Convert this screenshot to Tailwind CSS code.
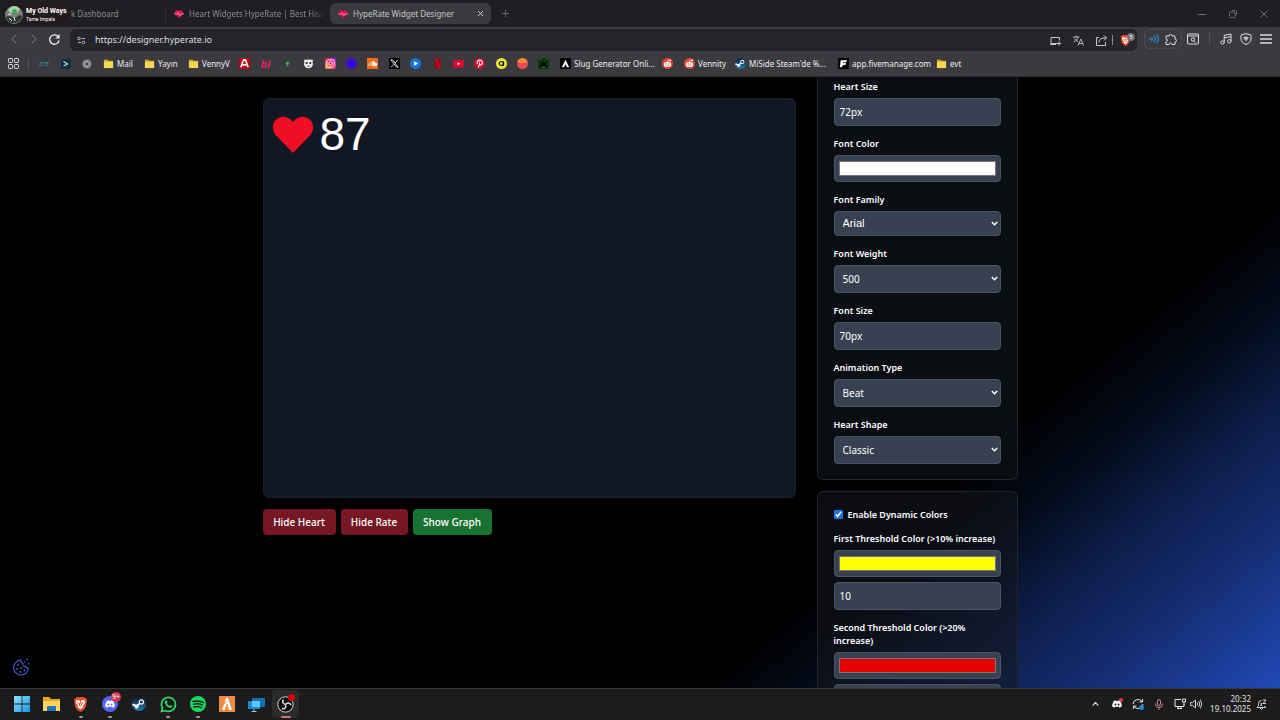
<!DOCTYPE html>
<html lang="en">
<head>
    <meta charset="UTF-8">
    <meta name="viewport" content="width=device-width, initial-scale=1.0">
    <title>HypeRate Widget Designer</title>
    <script src="https://cdn.jsdelivr.net/npm/@tailwindcss/browser@4"></script>
</head>

<body class="h-screen flex flex-col overflow-hidden bg-black text-white font-['Noto_Sans','Open_Sans',sans-serif]">
    <!-- Shared icons -->
    <svg class="absolute size-0">
        <symbol id="folder" viewBox="0 0 12 12"><path d="M1 2h4l1 1h5v8H1z" fill="#d9a928"/><path d="M1 4h10v7H1z" fill="#f6d556"/></symbol>
        <symbol id="pulse" viewBox="0 0 12 12"><path d="M6 11 1.5 6.5a3 3 0 0 1 4.5-4 3 3 0 0 1 4.5 4z" fill="#d5124e"/><path d="M0 6h4l1-2 2 4 1-2h4" fill="none" stroke="#ff9fb8" stroke-width=".9"/></symbol>
        <symbol id="reddit" viewBox="0 0 12 12"><circle cx="6" cy="6" r="6" fill="#e8432a"/><circle cx="9" cy="2.5" r="1" fill="#fff"/><path d="M6 4.5 6.6 2.300 9 2.500" fill="none" stroke="#fff" stroke-width=".6"/><ellipse cx="6" cy="7" rx="4" ry="2.800" fill="#fff"/><circle cx="4.400" cy="6.500" r=".8" fill="#e8432a"/><circle cx="7.600" cy="6.500" r=".8" fill="#e8432a"/><path d="M4.500 8.200q1.500 1 3 0" fill="none" stroke="#333" stroke-width=".5"/></symbol>
        <linearGradient id="sg" x1="0" y1="0" x2="0" y2="1"><stop offset="0" stop-color="#101b36"/><stop offset="1" stop-color="#1982b8"/></linearGradient>
        <symbol id="steam" viewBox="0 0 16 16"><circle cx="8" cy="8" r="8" fill="url(#sg)"/><path d="m.5 8.500 5 2L9 7" fill="none" stroke="#fff" stroke-width="2.200"/><circle cx="5.300" cy="10.800" r="2.200" fill="#fff"/><circle cx="10.700" cy="5.700" r="3" fill="#fff"/><circle cx="10.700" cy="5.700" r="1.700" fill="#1b3555"/></symbol>
        <symbol id="lion" viewBox="0 0 16 18"><path d="M4 1h8l1.500 1.500L15 3l-1 7c-.5 3-3 5-6 7-3-2-5.500-4-6-7L1 3l1.500-.5z" fill="#f04a23"/><path d="m4 4 4 1 4-1 1 3-2.500 3.500.5 1.500-3 2-3-2 .5-1.500L3 7z" fill="#fff"/><path d="M4.500 7 7 8v2l1 1 1-1V8l2.500-1M8 5v3" fill="none" stroke="#f04a23" stroke-width="1"/></symbol>
        <symbol id="discord" viewBox="0 0 16 12"><path d="M3 1 6 0l.6 1h2.800L10 0l3 1c2 3 3 6 2.600 9L12 12l-1-1.700H5L4 12 .4 10C0 7 1 4 3 1zm2.500 4a1.500 1.600 0 1 0 0 3.200 1.500 1.600 0 0 0 0-3.200zm5 0a1.500 1.600 0 1 0 0 3.200 1.500 1.600 0 0 0 0-3.200z" fill="#fff" fill-rule="evenodd"/></symbol>
        <symbol id="chevron" viewBox="0 0 7 5"><path d="m.8 1 2.700 2.700L6.200 1" fill="none" stroke="#fff" stroke-width="1.500"/></symbol>
    </svg>

    <!-- Tab strip -->
    <header class="shrink-0 h-[27px] bg-[#1f1e23] flex items-center text-[8px] leading-3">
        <div class="relative w-[165px] h-full">
            <button class="w-full h-full text-left pl-[71px] text-[#8b8b90] whitespace-nowrap">k Dashboard</button>
            <!-- Now playing overlay -->
            <div class="absolute left-1 top-1 flex items-center gap-[2px] text-white bg-[#241a1e] h-5">
                <svg class="size-5" viewBox="0 0 20 20"><circle cx="10" cy="11" r="9" fill="#7a7f7b"/><path d="M4 6c3-5 9-5 12-1l-3 4-4-2-2 3z" fill="#a9d3a2"/><path d="m8 6 4-1 1 3-3 2z" fill="#2fa84b"/><path d="M2 13c4-3 7 2 9 1s4-4 7-2c0 4-4 7-8 7s-7-2-8-6z" fill="#303632"/><path d="m5 14 3 3m2-4 1 4M4 10l3 1" stroke="#e5e5e5"/></svg>
                <div class="whitespace-nowrap font-[Roboto,sans-serif]">
                    <p class="text-[7px] leading-[9px] font-bold">My Old Ways</p>
                    <p class="text-[5px] leading-[6px]">Tame Impala</p>
                </div>
            </div>
        </div>
        <button class="w-[165px] h-4 border-l border-[#333338] flex items-center gap-[5px] pl-2 text-[#8b8b90]">
            <svg class="size-[10px] shrink-0"><use href="#pulse"/></svg>
            <span class="whitespace-nowrap [mask-image:linear-gradient(to_right,black_88%,transparent)]">Heart Widgets HypeRate | Best Hear</span>
        </button>
        <div class="w-[161px] h-[21px] rounded-md bg-[#3a3a3f] flex items-center gap-[5px] px-2 text-[#c4c4c8]">
            <svg class="size-[10px] shrink-0"><use href="#pulse"/></svg>
            <button class="flex-1 text-left">HypeRate Widget Designer</button>
            <button aria-label="Close tab"><svg class="size-[5px]" viewBox="0 0 6 6" stroke="#e4e4e7"><path d="m0 0 6 6M6 0 0 6"/></svg></button>
        </div>
        <button class="ml-[11px]" aria-label="New tab"><svg class="size-[7px]" viewBox="0 0 7 7" stroke="#66666b"><path d="M3.500 0v7M0 3.500h7"/></svg></button>
        <div class="ml-auto mr-3 flex items-center gap-[23px] text-[#707075]">
            <button aria-label="Minimize"><svg class="size-2" viewBox="0 0 8 8" stroke="currentColor"><path d="M0 4.500h8"/></svg></button>
            <button aria-label="Restore"><svg class="size-2" viewBox="0 0 8 8" stroke="currentColor" fill="none" stroke-width=".9"><rect x=".5" y="2" width="5.500" height="5.500" rx="1"/><path d="M2.500 1.500 3.300.5H6.500a1 1 0 0 1 1 1v3l-1 1"/></svg></button>
            <button aria-label="Close"><svg class="size-2" viewBox="0 0 8 8" stroke="currentColor"><path d="m.5.5 7 7m0-7-7 7"/></svg></button>
        </div>
    </header>

    <!-- Address bar -->
    <div class="shrink-0 h-6 bg-[#3a3a3f] flex items-center pl-[11px] pr-2 text-[#c8c8cc]">
        <button class="mr-[14px]" aria-label="Back"><svg class="w-[6px] h-[10px]" viewBox="0 0 6 10" fill="none" stroke="#7c7c81"><path d="M5.500.500 1 5l4.500 4.500"/></svg></button>
        <button class="mr-3" aria-label="Forward"><svg class="w-[6px] h-[10px]" viewBox="0 0 6 10" fill="none" stroke="#7c7c81"><path d="M.5.500 5 5 .5 9.500"/></svg></button>
        <button class="mr-[10px]" aria-label="Reload"><svg class="size-[11px]" viewBox="0 0 11 11" fill="none" stroke="#ececef" stroke-width="1.300"><path d="M9.500 3.200A4.700 4.700 0 1 0 10 6.500M10 .5v3.300H6.700"/></svg></button>
        <form class="flex-1 h-[22px] mt-[2px] rounded-md bg-[#242429] flex items-center pl-[7px] pr-[2px]">
            <svg class="size-[9px]" viewBox="0 0 9 9" fill="none" stroke="#b5b5ba"><circle cx="2" cy="2.500" r="1.300"/><path d="M4.500 2.500H8M1 6.500h3"/><circle cx="6.500" cy="6.500" r="1.300"/></svg>
            <input type="text" aria-label="Address" value="https://designer.hyperate.io" class="flex-1 ml-[9px] text-[9px] leading-4 text-[#dedee2] bg-transparent outline-none">
            <div class="flex items-center gap-3">
                <button type="button" aria-label="Cast"><svg class="size-[11px]" viewBox="0 0 11 11" fill="none" stroke="currentColor"><path d="M7 8.500H1v-6h8.500v3M0 9.500h6M7 8.500h4M9 6.500v4"/></svg></button>
                <button type="button" aria-label="Translate"><svg class="size-[11px]" viewBox="0 0 11 11" fill="none" stroke="currentColor" stroke-width=".9"><path d="M0 2h6.500M3.200.5V2M5.200 2C4.500 4.500 2.500 6 .5 7M1.500 3.500C2.500 5 3.500 6 5 6.500M5 10.500 7.800 4l2.700 6.500M6 8.500h3.500"/></svg></button>
                <button type="button" aria-label="Share"><svg class="size-[11px]" viewBox="0 0 11 11" fill="none" stroke="currentColor"><path d="M3 2.500H.5v8h9V7M3 7.500c0-3 2-4.500 5-4.500h2.500M8 .5 10.500 3 8 5.500"/></svg></button>
            </div>
            <span class="w-px h-[10px] bg-[#8b8b90] ml-[5px] mr-[7px]"></span>
            <button type="button" class="relative pr-1" aria-label="Brave Shields">
                <svg class="w-[11px] h-[13px]"><use href="#lion"/></svg>
                <span class="absolute left-[7px] -top-px size-2 rounded-full bg-[#6e6e78] text-[6px] leading-2 text-white">5</span>
            </button>
        </form>
        <div class="ml-[7px] w-[38px] h-5 rounded-md border border-[#4a4a50] flex items-center justify-between px-1">
            <button aria-label="Volume extension"><svg class="size-[10px]" viewBox="0 0 10 10" fill="none" stroke="#2593df" stroke-width="1.200"><circle cx="1" cy="5" r=".4"/><path d="M2.500 3q1.500 2 0 4M5 1.700q2.500 3.300 0 6.600M7.500.5q3.500 4.500 0 9"/></svg></button>
            <button aria-label="Extensions"><svg class="size-3" viewBox="0 0 12 12" fill="none" stroke="#dcdce0"><path d="M1 3h3a1.500 1.500 0 1 1 3 0h3v3a1.500 1.500 0 1 1 0 3v2.500H7a1.500 1.500 0 0 0-3 0H1V8.500a1.400 1.400 0 0 0 0-2.800z"/></svg></button>
        </div>
        <button class="ml-[5px]" aria-label="Search tabs"><svg class="size-3" viewBox="0 0 12 12" fill="none" stroke="#dcdce0"><rect x=".5" y="1" width="11" height="10" rx="1"/><path d="M1 3h10M7.500 8l1.500 1.500"/><circle cx="6" cy="6.500" r="1.700"/></svg></button>
        <span class="w-px h-3 bg-[#56565b] mx-[10px]"></span>
        <div class="flex items-center gap-2">
            <button aria-label="Media"><svg class="size-3" viewBox="0 0 12 12" fill="none" stroke="#dcdce0"><circle cx="2.500" cy="9.500" r="1.700"/><circle cx="9.300" cy="8.300" r="1.700"/><path d="M4.200 9.500V2.300L11 1v7.300M4.200 4.800 11 3.500"/></svg></button>
            <button aria-label="VPN"><svg class="size-3" viewBox="0 0 12 12" fill="none" stroke="#dcdce0"><path d="M6 .7 11 2v4c0 2.500-2 4.300-5 5.500C3 10.300 1 8.500 1 6V2z"/><path d="M3 4.500q3-2 6 0L6 8.500z" fill="#bcbcc0" stroke="none"/></svg></button>
            <button aria-label="Menu"><svg class="size-3" viewBox="0 0 12 12" stroke="#dcdce0" stroke-width="1.300"><path d="M0 2h12M0 6h12M0 10h12"/></svg></button>
        </div>
    </div>

    <!-- Bookmarks -->
    <nav class="shrink-0 h-[26px] bg-[#3a3a3f] border-b border-[#2a2a2e] flex items-center pl-2 text-[8px] leading-3 text-[#ededf0] whitespace-nowrap">
        <a href="#" aria-label="Apps"><svg class="size-[11px]" viewBox="0 0 11 11" fill="none" stroke="#dcdce0"><rect x=".5" y=".5" width="4" height="4" rx=".7"/><rect x="6.500" y=".5" width="4" height="4" rx=".7"/><rect x=".5" y="6.500" width="4" height="4" rx=".7"/><rect x="6.500" y="6.500" width="4" height="4" rx=".7"/></svg></a>
        <span class="w-px h-[10px] bg-[#56565b] ml-[9px] mr-[10px]"></span>
        <a href="#" class="w-[22px] text-[6px] text-[#2b9fb4]">ZTE</a>
        <a href="#" class="w-[21px]" aria-label="Console"><svg class="size-[10px]" viewBox="0 0 10 10"><rect width="10" height="10" rx="2" fill="#122c3e"/><path d="m2.500 2.500 4 2.500-4 2" fill="none" stroke="#bfe3f3" stroke-width="1.100"/></svg></a>
        <a href="#" class="w-[21px]" aria-label="ChatGPT"><svg class="size-[10px]" viewBox="0 0 10 10" fill="none" stroke="#c9c9cc" stroke-width=".7"><ellipse cx="5" cy="5" rx="4.600" ry="2"/><ellipse cx="5" cy="5" rx="4.600" ry="2" transform="rotate(60 5 5)"/><ellipse cx="5" cy="5" rx="4.600" ry="2" transform="rotate(120 5 5)"/></svg></a>
        <a href="#" class="w-[41px] flex items-center gap-[3px]"><svg class="size-[11px]"><use href="#folder"/></svg>Mail</a>
        <a href="#" class="w-11 flex items-center gap-[3px]"><svg class="size-[11px]"><use href="#folder"/></svg>Yayın</a>
        <a href="#" class="w-[51px] flex items-center gap-[3px]"><svg class="size-[11px]"><use href="#folder"/></svg>VennyV</a>
        <div class="w-[332px] flex items-center justify-between">
            <a href="#" aria-label="A"><svg class="size-[11px]" viewBox="0 0 12 12"><path fill="#c3000f" d="M0 0h12v12H0z"/><path d="M2 10 5 2h2l3 8M4 7.500h4" fill="none" stroke="#fff" stroke-width="1.800"/></svg></a>
            <a href="#" class="w-[11px] text-[11px] leading-[11px] font-bold italic text-[#e0245e]">bi</a>
            <a href="#" aria-label="Bolt"><svg class="size-[11px]" viewBox="0 0 12 12"><path d="M7.500 2.500 3.500 6.500h2l-1 3.500 4-4.500h-2z" fill="#35c46b"/></svg></a>
            <a href="#" aria-label="Panda"><svg class="size-[11px]" viewBox="0 0 12 12"><circle cx="2.500" cy="3" r="1.500" fill="#ddd"/><circle cx="9.500" cy="3" r="1.500" fill="#ddd"/><circle cx="6" cy="6.500" r="4.800" fill="#f3f3f3"/><circle cx="4" cy="5.500" r="1.200" fill="#222"/><circle cx="8" cy="5.500" r="1.200" fill="#222"/><path d="M4 8.500q2 2 4 0z" fill="#222"/></svg></a>
            <a href="#" aria-label="Instagram"><svg class="size-[11px]" viewBox="0 0 12 12"><defs><linearGradient id="ig" x1="0" y1="1" x2="1" y2="0"><stop stop-color="#ffb52e"/><stop offset=".5" stop-color="#e8235a"/><stop offset="1" stop-color="#9b2bf0"/></linearGradient></defs><rect width="12" height="12" rx="2" fill="url(#ig)"/><rect x="2" y="2" width="8" height="8" rx="2" fill="none" stroke="#fff"/><circle cx="6" cy="6" r="1.900" fill="none" stroke="#fff"/></svg></a>
            <a href="#" aria-label="Music"><svg class="size-[11px]" viewBox="0 0 12 12"><circle cx="6" cy="6" r="6" fill="#3a0ce0"/><path d="M2.500 4.500q3.500-1.500 7 .5M3 6.500q3-1 6 .5M3.500 8.500q2.500-.7 4.500.3" stroke="#2207a0" fill="none"/></svg></a>
            <a href="#" aria-label="SoundCloud"><svg class="size-[11px]" viewBox="0 0 12 12"><path fill="#f26a1b" d="M0 0h12v12H0z"/><path d="M6 8.500V4q2.500-1 3 1.500 2 0 2 1.500T9.500 8.500zM2 6v2.500M3.300 5v3.500M4.600 4.500v4" fill="#fff" stroke="#fff" stroke-width=".6"/></svg></a>
            <a href="#" aria-label="X"><svg class="size-[11px]" viewBox="0 0 12 12"><path d="M0 0h12v12H0z"/><path d="M2 2h1.800L10 10H8.200zM9.700 2 6.800 5.300M5.200 6.900 2.300 10" fill="none" stroke="#fff" stroke-width=".9"/></svg></a>
            <a href="#" aria-label="Play"><svg class="size-[11px]" viewBox="0 0 12 12"><circle cx="6" cy="6" r="6" fill="#1275d8"/><path d="m4.500 3.500 4.500 2.500-4.500 2.500z" fill="#fff"/></svg></a>
            <a href="#" aria-label="Netflix"><svg class="size-[11px]" viewBox="0 0 12 12"><path d="M3 0h2.500v12H3zM7 0h2.500v12H7z" fill="#9c0610"/><path d="M3 0h2.500l4 12H7z" fill="#c90b17"/></svg></a>
            <a href="#" aria-label="YouTube"><svg class="size-[11px]" viewBox="0 0 12 12"><rect y="2" width="12" height="8.500" rx="2" fill="#e0052f"/><path d="m5 4.500 3 1.700L5 8z" fill="#fff"/></svg></a>
            <a href="#" aria-label="Pinterest"><svg class="size-[11px]" viewBox="0 0 12 12"><circle cx="6" cy="6" r="6" fill="#d40b2b"/><path d="M3.700 6.500C2.500 3 5 2.300 6.300 2.300c4 0 3.200 5.200.7 5.200-.8 0-1.300-.6-1.300-.6M6.300 4.300 4.800 10.500" fill="none" stroke="#fff" stroke-width="1.200"/></svg></a>
            <a href="#" aria-label="Eksi"><svg class="size-[11px]" viewBox="0 0 12 12"><circle cx="6" cy="6" r="6" fill="#e9ea2c"/><circle cx="5.800" cy="6" r="2.200" fill="none" stroke="#111" stroke-width="1.300"/><path d="M8.300 3.500v5" stroke="#111" stroke-width="1.200"/></svg></a>
            <a href="#" aria-label="Sunset"><svg class="size-[11px]" viewBox="0 0 12 12"><circle cx="6" cy="6" r="6" fill="#ee4e48"/><path d="M.5 4A6 6 0 0 1 11.500 4L6 6z" fill="#f78b36"/><path d="M.5 7.500q5-3 11 0" fill="none" stroke="#d9536a"/></svg></a>
            <a href="#" aria-label="Alien"><svg class="size-[11px]" viewBox="0 0 12 12"><path fill="#073c0c" d="M0 0h12v12H0z"/><path d="M2 10V8l2-1-2-3 3 1 1-2 1 2 3-1-2 3 2 1v2l-3-1H5z"/><path d="M1 1h2M9 1h2M4.500 10h3" stroke="#169a28"/></svg></a>
            <a href="#" aria-label="Slug Generator"><svg class="size-[11px]" viewBox="0 0 12 12"><path fill="#050505" d="M0 0h12v12H0z"/><path d="M2 10 6 2l4 8H7.500L6 6.500 4.500 10z" fill="#fff"/></svg></a>
        </div>
        <a href="#" class="w-[91px] pl-[3px]">Slug Generator Onli...</a>
        <a href="#" class="w-[22px]" aria-label="Reddit"><svg class="size-[11px]"><use href="#reddit"/></svg></a>
        <a href="#" class="w-[51px] flex items-center gap-[3px]"><svg class="size-[11px]"><use href="#reddit"/></svg>Vennity</a>
        <a href="#" class="w-[103px] flex items-center gap-[3px]"><svg class="size-[11px]"><use href="#steam"/></svg>MiSide Steam'de %...</a>
        <a href="#" class="w-[98px] flex items-center gap-[3px]"><svg class="size-[11px] shrink-0" viewBox="0 0 12 12"><path fill="#050505" d="M0 0h12v12H0z"/><path d="M3 2.500h7L9 4.500H5.500v1H9l-1 2H5.500L4 10H2z" fill="#fff"/></svg>app.fivemanage.com</a>
        <a href="#" class="flex items-center gap-[3px]"><svg class="size-[11px]"><use href="#folder"/></svg>evt</a>
    </nav>

    <!-- Widget designer -->
    <main class="relative flex-1 min-h-0 overflow-hidden bg-[linear-gradient(140deg,#000_71%,#030b1a_77%,#0d1f4e_84%,#142c70_90%,#2149b5_100%)]">
        <div class="mx-auto max-w-[755px] grid grid-cols-[1fr_201px] gap-[21px] items-start">
            <section class="pt-[21px]">
                <div class="h-[400px] rounded-md border border-[#172131] bg-[#111723] p-2 flex items-start gap-[6px]">
                    <svg class="w-[42px] h-[54px]" viewBox="0 0 42 54"><path d="M21 46 4.500 29C-1 23 0 15 5.500 11.500 11 8 17.500 10 21 15c3.500-5 10-7 15.500-3.500C42 15 43 23 37.500 29z" fill="#ee0f25"/></svg>
                    <span class="text-[46px] leading-[54px] font-['Liberation_Sans',Arial,sans-serif]">87</span>
                </div>
                <div class="mt-[11px] flex gap-[5px] text-[10px] leading-[15px] font-medium">
                    <button class="w-[73px] h-[26px] rounded bg-[#751824] whitespace-nowrap">Hide Heart</button>
                    <button class="w-[67px] h-[26px] rounded bg-[#751824] whitespace-nowrap">Hide Rate</button>
                    <button class="w-[79px] h-[26px] rounded bg-[#187333] whitespace-nowrap">Show Graph</button>
                </div>
            </section>

            <aside class="flex flex-col gap-[11px] text-[9px] leading-[13px] font-semibold">
                <div class="flex flex-col gap-[11px] px-4 pt-[3px] pb-[15px] rounded-b-md border border-t-0 border-[#22262b] bg-[#0a0d12]">
                    <div class="flex flex-col gap-[5px]">
                        <label for="heartSize">Heart Size</label>
                        <input id="heartSize" type="text" value="72px" class="w-full h-7 px-[5px] rounded border border-[#4b5563] bg-[#374151] text-[10px] font-normal">
                    </div>
                    <div class="flex flex-col gap-[5px]">
                        <label for="fontColor">Font Color</label>
                        <input id="fontColor" type="color" value="#ffffff" class="block w-full h-[27px] px-1 py-[5px] rounded border border-[#4b5563] bg-[#374151] [&::-webkit-color-swatch-wrapper]:p-0">
                    </div>
                    <div class="flex flex-col gap-[5px]">
                        <label for="fontFamily">Font Family</label>
                        <div class="relative">
                            <select id="fontFamily" class="block appearance-none w-full h-[25px] px-2 rounded border border-[#4b5563] bg-[#374151] text-[11px] font-normal font-['Liberation_Sans',Arial,sans-serif]"><option>Arial</option></select>
                            <svg class="absolute right-[3px] top-[10px] w-[7px] h-[5px] pointer-events-none"><use href="#chevron"/></svg>
                        </div>
                    </div>
                    <div class="flex flex-col gap-[5px]">
                        <label for="fontWeight">Font Weight</label>
                        <div class="relative">
                            <select id="fontWeight" class="block appearance-none w-full h-7 px-2 rounded border border-[#4b5563] bg-[#374151] text-[10px] font-normal"><option>500</option></select>
                            <svg class="absolute right-[3px] top-[11px] w-[7px] h-[5px] pointer-events-none"><use href="#chevron"/></svg>
                        </div>
                    </div>
                    <div class="flex flex-col gap-[5px]">
                        <label for="fontSize">Font Size</label>
                        <input id="fontSize" type="text" value="70px" class="w-full h-7 px-[5px] rounded border border-[#4b5563] bg-[#374151] text-[10px] font-normal">
                    </div>
                    <div class="flex flex-col gap-[5px]">
                        <label for="animationType">Animation Type</label>
                        <div class="relative">
                            <select id="animationType" class="block appearance-none w-full h-7 px-2 rounded border border-[#4b5563] bg-[#374151] text-[10px] font-normal"><option>Beat</option></select>
                            <svg class="absolute right-[3px] top-[11px] w-[7px] h-[5px] pointer-events-none"><use href="#chevron"/></svg>
                        </div>
                    </div>
                    <div class="flex flex-col gap-[5px]">
                        <label for="heartShape">Heart Shape</label>
                        <div class="relative">
                            <select id="heartShape" class="block appearance-none w-full h-7 px-2 rounded border border-[#4b5563] bg-[#374151] text-[10px] font-normal"><option>Classic</option></select>
                            <svg class="absolute right-[3px] top-[11px] w-[7px] h-[5px] pointer-events-none"><use href="#chevron"/></svg>
                        </div>
                    </div>
                </div>

                <div class="flex flex-col gap-[11px] p-4 rounded-md border border-[#22262b] bg-[linear-gradient(140deg,#0b0d12_35%,#142142)]">
                    <label class="flex items-center gap-[5px]">
                        <input type="checkbox" checked class="size-[9px] accent-[#1a73e8]">
                        Enable Dynamic Colors
                    </label>
                    <div class="flex flex-col gap-[5px]">
                        <label for="firstColor">First Threshold Color (&gt;10% increase)</label>
                        <input id="firstColor" type="color" value="#ffff00" class="block w-full h-[27px] px-1 py-[5px] rounded border border-[#4b5563] bg-[#374151] [&::-webkit-color-swatch-wrapper]:p-0">
                        <input type="text" value="10" aria-label="First threshold" class="w-full h-7 px-[5px] rounded border border-[#4b5563] bg-[#374151] text-[10px] font-normal">
                    </div>
                    <div class="flex flex-col gap-[5px]">
                        <label for="secondColor">Second Threshold Color (&gt;20% increase)</label>
                        <input id="secondColor" type="color" value="#e60000" class="block w-full h-[27px] px-1 py-[5px] rounded border border-[#4b5563] bg-[#374151] [&::-webkit-color-swatch-wrapper]:p-0">
                        <input type="text" aria-label="Second threshold" class="w-full h-7 px-[5px] rounded border border-[#4b5563] bg-[#374151] text-[10px] font-normal">
                    </div>
                </div>
            </aside>
        </div>

        <button class="absolute left-3 bottom-3" aria-label="Cookie settings">
            <svg class="size-[18px]" viewBox="0 0 18 18" fill="none" stroke="#4457c8" stroke-width="1.200"><path d="M9 2.200A7.400 7.400 0 1 0 16.400 10c-1.800.4-2.700-.4-2.900-1.600-2 .3-3-.9-2.500-2.700C9.500 5.200 8.700 4 9 2.200z"/><g fill="#4457c8" stroke="none"><circle cx="6" cy="7" r="1"/><circle cx="5" cy="11" r="1"/><circle cx="9" cy="10" r="1"/><circle cx="8.500" cy="14" r="1"/><circle cx="12.500" cy="12.500" r="1"/><circle cx="12.500" cy="4" r=".7"/><circle cx="15" cy="1.500" r=".9"/><circle cx="16.500" cy="5.500" r=".8"/></g></svg>
        </button>
    </main>

    <!-- Taskbar -->
    <footer class="shrink-0 h-8 bg-[#1c1c1c] border-t border-[#38383a] flex items-center pl-2 pr-[13px] pb-px">
        <div class="flex items-center gap-[2px]">
            <button class="w-[27px] h-7 flex items-center justify-center" aria-label="Start"><svg class="size-4" viewBox="0 0 16 16"><defs><linearGradient id="win" x1="0" y1="0" x2="1" y2="1"><stop stop-color="#8fe3ff"/><stop offset="1" stop-color="#1795e3"/></linearGradient></defs><path d="M0 0h7.600v7.600H0zM8.400 0H16v7.600H8.400zM0 8.400h7.600V16H0zM8.400 8.400H16V16H8.400z" fill="url(#win)"/></svg></button>
            <button class="w-[28px] h-7 flex items-center justify-center" aria-label="Files"><svg class="size-[17px]" viewBox="0 0 17 17"><path d="M0 1h6l2 2h9v12H0z" fill="#e9a61d"/><path d="M0 5h17v10H0z" fill="#ffd45c"/><path d="M4 15v-4q0-1 1-1h7q1 0 1 1v4z" fill="#1b78b8"/></svg></button>
            <button class="relative w-[27px] h-7 flex items-center justify-center" aria-label="Brave"><svg class="w-[15px] h-[17px]"><use href="#lion"/></svg><span class="absolute bottom-0 w-1 h-[2px] rounded bg-[#9c9c9c]"></span></button>
            <button class="relative w-[27px] h-7 flex items-center justify-center" aria-label="Discord">
                <span class="size-4 rounded-full bg-[#5865f2] flex items-center justify-center"><svg class="w-[10px] h-2"><use href="#discord"/></svg></span>
                <span class="absolute left-[15px] top-[2px] size-[10px] rounded-full bg-[#d8374f] text-[7px] leading-[10px] text-white">9+</span>
                <span class="absolute bottom-0 w-1 h-[2px] rounded bg-[#9c9c9c]"></span>
            </button>
            <button class="w-[27px] h-7 flex items-center justify-center" aria-label="Steam"><svg class="size-[14px]"><use href="#steam"/></svg></button>
            <button class="relative w-[28px] h-7 flex items-center justify-center" aria-label="WhatsApp"><svg class="size-[17px]" viewBox="0 0 17 17"><path d="M1.500 15.500 2.500 12A7 7 0 1 1 5.500 14.700z" fill="#111b15" stroke="#35d366" stroke-width="1.700"/><path d="M5.500 4.500 7 4.700l.6 1.600-.8 1q1 2 2.700 2.600l1-.9 1.800.9c0 2-2 2.300-3.500 1.600Q5.500 10 4.700 7q-.2-1.500.8-2.500z" fill="#35d366"/></svg><span class="absolute bottom-0 w-1 h-[2px] rounded bg-[#9c9c9c]"></span></button>
            <button class="relative w-[27px] h-7 flex items-center justify-center" aria-label="Spotify"><svg class="size-4" viewBox="0 0 16 16"><circle cx="8" cy="8" r="8" fill="#1ed760"/><path d="M3 5.500q5.500-1.500 10.500 1M3.500 8.300q4.700-1.300 9 .9M4 11q4-1 7.500.8" fill="none" stroke="#0f2317" stroke-width="1.400" stroke-linecap="round"/></svg><span class="absolute bottom-0 w-1 h-[2px] rounded bg-[#9c9c9c]"></span></button>
            <button class="w-[28px] h-7 flex items-center justify-center" aria-label="FiveM"><svg class="size-4" viewBox="0 0 16 16"><path fill="#ef8a45" d="M0 0h16v16H0z"/><path d="M7 2h2l4 12h-3L8 7l-2 7H3z" fill="#fff"/><path d="m4 9 4-4M6.500 13 9 9" stroke="#ef8a45"/></svg></button>
            <button class="w-[27px] h-7 flex items-center justify-center" aria-label="Remote desktop"><svg class="size-[17px]" viewBox="0 0 17 17"><rect x="4" y="2" width="13" height="9" rx="1" fill="#176eb8"/><rect y="5" width="12" height="8" rx="1" fill="#1c8bd6"/><path d="M4 5h8v6H4z" fill="#5cc8f7"/><path d="M6 13v2M3.500 15.500h5" stroke="#a8c5d9"/></svg></button>
            <button class="relative w-[27px] h-7 rounded bg-[#2b2b2b] flex items-center justify-center" aria-label="OBS"><svg class="size-[17px]" viewBox="0 0 17 17"><circle cx="8.500" cy="8.500" r="7.700" fill="#0c0c0c" stroke="#d9d9d9"/><g fill="none" stroke="#d9d9d9" stroke-width="1.500"><path d="M8.500 8.500C5.500 8 5 5.500 6.500 3.500"/><path d="M8.500 8.500C10.500 6 13 6.800 14 9.200"/><path d="M8.500 8.500c1 3-1 4.700-3.500 4.300"/></g></svg><span class="absolute right-1 top-1 size-[7px] rounded-full bg-[#d8000c]"></span><span class="absolute bottom-0 w-[10px] h-[2px] rounded bg-[#d8727a]"></span></button>
        </div>
        <div class="ml-auto flex items-center text-[#e4e4e4]">
            <button class="mr-[13px]" aria-label="Hidden icons"><svg class="w-[7px] h-1" viewBox="0 0 8 5" fill="none" stroke="currentColor" stroke-width="1.300"><path d="m.5 4.500 3.500-4 3.500 4"/></svg></button>
            <button class="relative mr-[10px]" aria-label="Discord tray"><svg class="w-[10px] h-2"><use href="#discord"/></svg><span class="absolute -right-px -top-[2px] size-1 rounded-full bg-[#e8364c]"></span></button>
            <button class="relative mr-[11px]" aria-label="Sync"><svg class="size-3" viewBox="0 0 12 12" fill="none" stroke="currentColor"><path d="M1 6a5 5 0 0 1 9-2.500M10.500 1v3h-3M11 6a5 5 0 0 1-9 2.500M1.500 11V8h3"/></svg><span class="absolute right-0 bottom-0 size-[5px] rounded-full bg-[#1f87dc]"></span></button>
            <button class="mr-[11px]" aria-label="Microphone"><svg class="w-2 h-[11px]" viewBox="0 0 8 11" fill="none" stroke="#c98787"><rect x="2.500" y=".5" width="3" height="6" rx="1.500"/><path d="M.5 4.500v1a3.500 3 0 0 0 7 0v-1M4 8.500V11"/></svg></button>
            <button class="mr-1" aria-label="Network"><svg class="size-3" viewBox="0 0 12 12" fill="none" stroke="currentColor"><path d="M7 1.500H1v7h9V6M3 10.500h5M4 8.500v2M7 8.500v2M8.500 1h3v3h-3zM10 4v3"/></svg></button>
            <button class="mr-2" aria-label="Volume"><svg class="size-3" viewBox="0 0 12 12" fill="none" stroke="currentColor" stroke-width=".9"><path d="M.5 4.500h2l3-2.500v8l-3-2.500h-2zM7 4.500q1 1.500 0 3M8.700 3q2 3 0 6M10.300 1.500q2.700 4.500 0 9"/></svg></button>
            <time class="text-[8px] leading-[10px] text-right mr-[5px]">20:32<br>19.10.2025</time>
            <button aria-label="Notifications"><svg class="size-[11px]" viewBox="0 0 11 11" fill="none" stroke="currentColor" stroke-width=".9"><path d="M5.500 1.500A3 3 0 0 0 2.500 4.500v2L1 8.500h8.500L8.500 7M4 9q1.500 2.500 3 0M7 1h3L7 4.500h3M4.500 4.500h1.500l-1.500 2H6"/></svg></button>
        </div>
    </footer>
</body>
</html>
